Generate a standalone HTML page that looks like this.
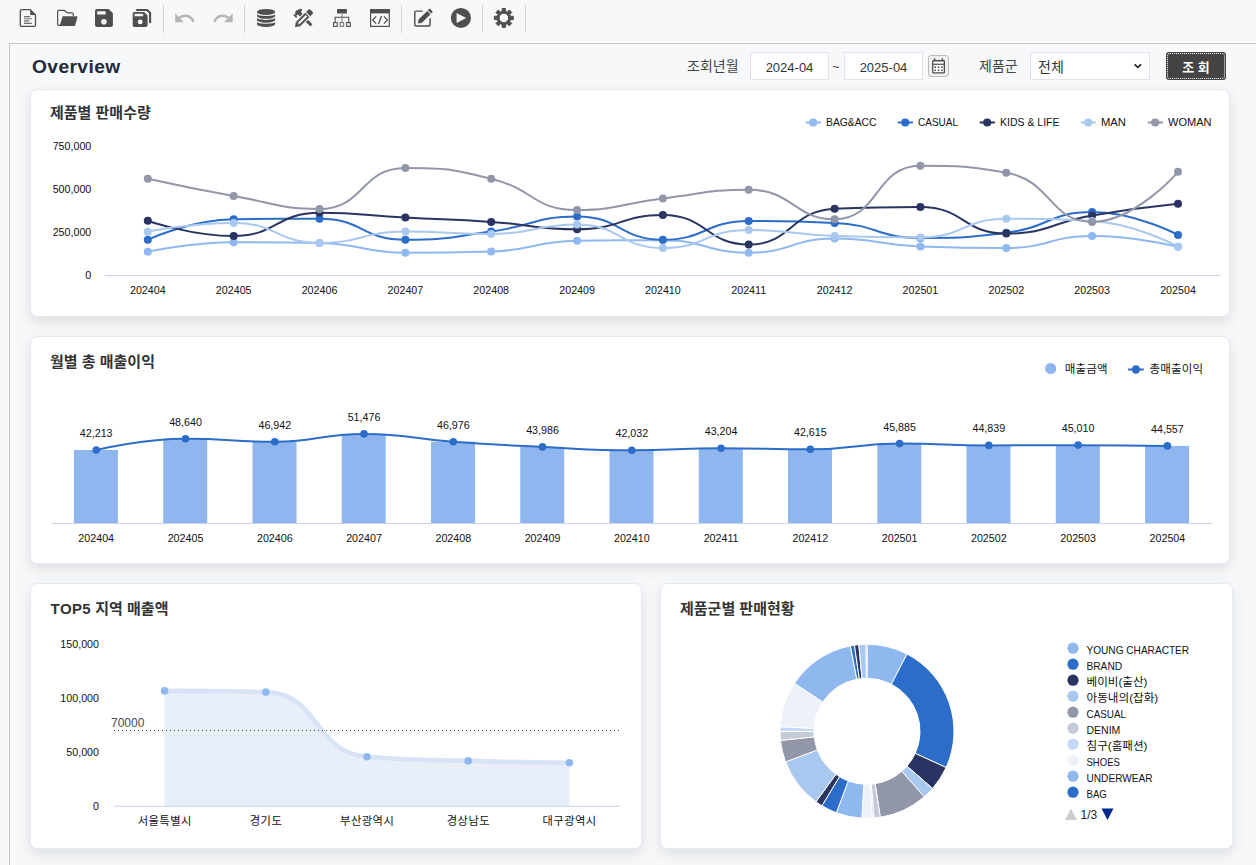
<!DOCTYPE html>
<html lang="ko">
<head>
<meta charset="utf-8">
<title>Overview</title>
<style>
html,body{margin:0;padding:0;overflow:hidden;}
body{width:1256px;height:865px;overflow:hidden;background:#f7f8fa;position:relative;
  font-family:"Liberation Sans","Noto Sans CJK KR","NanumGothic",sans-serif;color:#333;}
.abs{position:absolute;}
.sep{position:absolute;top:5px;width:1px;height:28px;background:#d4d4d4;}
.ico{position:absolute;overflow:visible;}
.frame{position:absolute;left:9px;top:43px;width:1247px;height:822px;border-left:1px solid #c6c6c6;border-top:1px solid #c6c6c6;box-sizing:border-box;background:#f7f8fa;}
.card{position:absolute;background:#fff;border:1px solid #e4e9f3;border-radius:7px;box-sizing:border-box;
  box-shadow:0 5px 13px rgba(0,0,0,0.105);}
.ctitle{position:absolute;font-size:15px;font-weight:bold;color:#333;white-space:nowrap;}
.h1{position:absolute;left:32px;top:54.7px;letter-spacing:0.4px;font-size:19.2px;font-weight:bold;color:#1e293b;line-height:24px;white-space:nowrap;}
.lbl{position:absolute;font-size:14px;color:#444;white-space:nowrap;line-height:20px;}
.inp{position:absolute;top:52px;height:28px;box-sizing:border-box;border:1px solid #dfe3ee;background:#fff;font-size:13px;color:#333;line-height:29px;text-align:center;}
</style>
</head>
<body>
<!-- toolbar -->
<div id="toolbar">
<svg class="abs" style="left:0;top:0" width="560" height="40" viewBox="0 0 560 40">
<g fill="none" stroke="#d5d5d5" stroke-width="1">
<path d="M163.5 5V33M244.5 5V33M401.5 5V33M482.5 5V33M525.5 5V33"/>
</g>
<g fill="#4f4f4f" stroke="none">
<!-- new doc -->
<path d="M21.8 9.6H30L35.5 15.1V24.9A1.5 1.5 0 0 1 34 26.4H21.8A1.5 1.5 0 0 1 20.3 24.9V11.1A1.5 1.5 0 0 1 21.8 9.6Z" fill="none" stroke="#4f4f4f" stroke-width="1.3"/>
<path d="M30.2 9.3L35.8 14.9H30.2Z"/>
<path d="M24 16.3H30.1V17.2H24ZM24 18.4H31.9V19.3H24ZM24 20.55H29.1V21.45H24ZM24 22.75H31.9V23.65H24Z" fill="#444"/>
<!-- folder open -->
<path d="M61 25.3H58.6A1 1 0 0 1 57.6 24.3V11.4A1 1 0 0 1 58.6 10.4H64.3L67.6 12.9H72.2A1 1 0 0 1 73.2 13.9V16" fill="none" stroke="#4f4f4f" stroke-width="1.2"/>
<path d="M62.6 16.2H76.6A0.8 0.8 0 0 1 77.4 17.2L75.2 25.2A1 1 0 0 1 74.2 25.9H59.6Z"/>
<!-- save -->
<path d="M97 9H108.6L112.9 13.3V25A2 2 0 0 1 110.9 27H97A2 2 0 0 1 95 25V11A2 2 0 0 1 97 9ZM97.2 11.2V14.4H105.6V11.2ZM103.9 18.9A2.8 2.8 0 1 0 103.9 24.5A2.8 2.8 0 1 0 103.9 18.9Z" fill-rule="evenodd"/>
<!-- save all -->
<path d="M134.4 12.1H144.2L147.6 15.5V25.3A1.7 1.7 0 0 1 145.9 27H134.4A1.7 1.7 0 0 1 132.7 25.3V13.8A1.7 1.7 0 0 1 134.4 12.1ZM134.6 13.8V16.3H143.2V13.8ZM140.2 19.5A2.4 2.4 0 1 0 140.2 24.3A2.4 2.4 0 1 0 140.2 19.5Z" fill-rule="evenodd"/>
<path d="M136.2 10H147L150.100 13.100V23" fill="none" stroke="#4f4f4f" stroke-width="2.1" stroke-linejoin="round"/>
<!-- database -->
<ellipse cx="266.05" cy="11.9" rx="9.05" ry="3"/>
<path d="M257 11.9V23.9A9.05 3 0 0 0 275.1 23.9V11.9Z"/>
<g fill="none" stroke="#f7f8fa" stroke-width="1.15"><path d="M256.5 12.45A9.55 3 0 0 0 275.6 12.45"/><path d="M256.5 16.35A9.55 3 0 0 0 275.6 16.35"/><path d="M256.5 20.25A9.55 3 0 0 0 275.6 20.25"/></g>
<!-- sitemap -->
<rect x="337" y="9.1" width="9.9" height="4.5" rx="0.6"/>
<rect x="341.3" y="13.6" width="1.3" height="9" fill="#9a9a9a"/>
<path d="M335.2 22.5V17.3H348.7V22.5" fill="none" stroke="#4f4f4f" stroke-width="1.1"/>
<g fill="none" stroke="#4f4f4f" stroke-width="1.1"><rect x="333.6" y="22.6" width="3.6" height="3.8"/><rect x="340.1" y="22.6" width="3.6" height="3.8" stroke="#777"/><rect x="346.7" y="22.6" width="3.6" height="3.8"/></g>
<!-- code window -->
<rect x="370.6" y="9.6" width="18.7" height="16.8" fill="none" stroke="#4f4f4f" stroke-width="1.2"/>
<rect x="370" y="9" width="19.9" height="4.4"/>
<path d="M376.2 16.4L372.7 20L376.2 23.6M383.900 16.4L387.400 20L383.900 23.6M381.5 16L378.600 24" fill="none" stroke="#4f4f4f" stroke-width="1.3"/>
<!-- edit -->
<path d="M422.7 11.1H416.300A1.500 1.500 0 0 0 414.800 12.600V24.400A1.500 1.500 0 0 0 416.300 25.900H428.600A1.500 1.500 0 0 0 430.100 24.400V18.2" fill="none" stroke="#4f4f4f" stroke-width="1.45"/>
<g transform="translate(-0.5,0.8)"><path d="M419.100 18.600L427.600 10.100L431.000 13.500L422.500 22.000L418.500 22.600Z"/>
<path d="M428.300 9.400L429.400 8.300A0.900 0.900 0 0 1 430.700 8.300L432.800 10.400A0.900 0.900 0 0 1 432.800 11.700L431.700 12.800Z"/></g>
<!-- play -->
<path d="M460.900 7.900A10.050 10.050 0 1 0 460.900 28.000A10.050 10.050 0 1 0 460.900 7.900ZM456.600 13.000L466.100 17.950L456.600 22.900Z" fill-rule="evenodd"/>
<path d="M502.06 11.49 L502.18 8.50 L505.52 8.50 L505.64 11.49 L507.15 12.12 L509.36 10.09 L511.71 12.44 L509.68 14.65 L510.31 16.16 L513.30 16.28 L513.30 19.62 L510.31 19.74 L509.68 21.25 L511.71 23.46 L509.36 25.81 L507.15 23.78 L505.64 24.41 L505.52 27.40 L502.18 27.40 L502.06 24.41 L500.55 23.78 L498.34 25.81 L495.99 23.46 L498.02 21.25 L497.39 19.74 L494.40 19.62 L494.40 16.28 L497.39 16.16 L498.02 14.65 L495.99 12.44 L498.34 10.09 L500.55 12.12Z M503.85 13.20A4.75 4.75 0 1 0 503.85 22.70A4.75 4.75 0 1 0 503.85 13.20Z" fill-rule="evenodd" stroke="#4f4f4f" stroke-width="1" stroke-linejoin="round"/>
<!-- tools -->
<path d="M300.3 14.3L311.4 25.4" fill="none" stroke="#4f4f4f" stroke-width="2.9"/>
<path d="M296.2 10.6L300.8 8.7L302.3 9.2L301.1 11.5L302.6 14.2L300.1 16.6L297.7 14.6L296.5 15.4L297.2 17.8L295.6 17.6L293 14.4L295.4 14.5L295.1 12.4Z"/>
<path d="M297.0 25.2L310.6 11.6" fill="none" stroke="#f7f8fa" stroke-width="8" stroke-linecap="round"/>
<path d="M298.3 23.9L307.3 14.9" fill="none" stroke="#4f4f4f" stroke-width="6"/>
<path d="M298.7 23.5L306.5 15.7" fill="none" stroke="#f7f8fa" stroke-width="2.1"/>
<path d="M295.0 27.1L295.9 21.6L300.6 26.3Z"/>
<path d="M306.0 12.0L310.2 16.2L312.5 13.9A1.5 1.5 0 0 0 312.5 11.8L310.400 9.700A1.5 1.5 0 0 0 308.300 9.700Z"/>
</g>
<g fill="#b4b4b4">
<path transform="translate(173.33 6.93) scale(0.95)" d="M12.5 8c-2.650 0-5.050.990-6.900 2.600L2 7v9h9l-3.620-3.620c1.390-1.160 3.160-1.880 5.120-1.880 3.540 0 6.550 2.310 7.600 5.500l2.370-.780C21.080 11.030 17.150 8 12.500 8z"/>
<path transform="translate(211.77 6.93) scale(0.95)" d="M18.400 10.600C16.550 8.990 14.150 8 11.500 8c-4.650 0-8.580 3.030-9.960 7.220L3.900 16c1.050-3.190 4.050-5.500 7.600-5.500 1.950 0 3.730.720 5.120 1.880L13 16h9V7l-3.600 3.600z"/>
</g>
</svg>

</div>
<div class="frame"></div>
<div class="h1">Overview</div>

<div class="lbl" style="left:687px;top:56px;">조회년월</div>
<div class="inp" style="left:750px;width:79px;">2024-04</div>
<div class="lbl" style="left:832px;top:57px;font-size:13px;">~</div>
<div class="inp" style="left:844px;width:79px;">2025-04</div>
<svg class="abs" style="left:928px;top:55px" width="21" height="22" viewBox="0 0 21 22">
<rect x="0.5" y="0.5" width="20" height="21" rx="2.5" fill="#efefef" stroke="#bdbdbd"/>
<rect x="4.75" y="5.75" width="11.6" height="12.2" rx="0.6" fill="#fff" stroke="#4d4d4d" stroke-width="1.3"/>
<path d="M4.75 9.25H16.35" stroke="#4d4d4d" stroke-width="1.2"/>
<path d="M6.7 3.2V5.6M14.4 3.2V5.6" stroke="#4d4d4d" stroke-width="1.3"/>
<g fill="#4d4d4d"><rect x="6.400" y="11.500" width="1.600" height="1.500"/><rect x="9.750" y="11.500" width="1.600" height="1.500"/><rect x="13.100" y="11.500" width="1.600" height="1.500"/><rect x="6.400" y="14.550" width="1.600" height="1.500"/><rect x="9.750" y="14.550" width="1.600" height="1.500"/><rect x="13.100" y="14.550" width="1.600" height="1.500"/></g>
</svg>
<div class="lbl" style="left:979px;top:56px;">제품군</div>
<div class="inp" style="left:1030px;width:120px;text-align:left;padding-left:7px;font-size:14px;line-height:28px;">전체</div>
<svg class="abs" style="left:1133px;top:62px" width="10" height="8" viewBox="0 0 10 8"><path d="M1.6 2.4 L4.8 5.4 L8 2.4" fill="none" stroke="#222" stroke-width="1.7"/></svg>
<div class="abs" style="left:1166px;top:52px;width:60px;height:28px;background:#444;border-radius:3px;box-sizing:border-box;"></div>
<div class="abs" style="left:1167px;top:53px;width:58px;height:26px;border:1px dotted #fff;border-radius:3px;box-sizing:border-box;"></div>
<div class="abs" style="left:1166px;top:52px;width:60px;height:28px;line-height:31px;text-align:center;color:#fff;font-size:13px;font-weight:bold;white-space:pre;">조 회</div>

<!-- cards -->
<div class="card" style="left:30px;top:89px;width:1200px;height:228px;"></div>
<div class="card" style="left:30px;top:336px;width:1200px;height:228px;"></div>
<div class="card" style="left:30px;top:583px;width:612px;height:266px;"></div>
<div class="card" style="left:660px;top:583px;width:573px;height:266px;"></div>

<div class="ctitle" style="left:50px;top:100.5px;">제품별 판매수량</div>
<div class="ctitle" style="left:50px;top:349.5px;">월별 총 매출이익</div>
<div class="ctitle" style="left:50.6px;top:596.5px;"><span style="letter-spacing:0.4px">TOP5</span> 지역 매출액</div>
<div class="ctitle" style="left:680px;top:596.5px;">제품군별 판매현황</div>

<svg class="abs" style="left:0;top:0" width="1256" height="330" viewBox="0 0 1256 330" font-family='&quot;Liberation Sans&quot;, &quot;Noto Sans CJK KR&quot;, &quot;NanumGothic&quot;, sans-serif'>
<line x1="104.9" y1="275.4" x2="1220.9" y2="275.4" stroke="#c9d3ea" stroke-width="1"/>
<text x="91.3" y="279.0" text-anchor="end" font-size="10.7" fill="#111">0</text>
<text x="91.3" y="235.9" text-anchor="end" font-size="10.7" fill="#111">250,000</text>
<text x="91.3" y="192.8" text-anchor="end" font-size="10.7" fill="#111">500,000</text>
<text x="91.3" y="149.7" text-anchor="end" font-size="10.7" fill="#111">750,000</text>
<text x="147.8" y="294" text-anchor="middle" font-size="10.7" fill="#111">202404</text>
<text x="233.7" y="294" text-anchor="middle" font-size="10.7" fill="#111">202405</text>
<text x="319.5" y="294" text-anchor="middle" font-size="10.7" fill="#111">202406</text>
<text x="405.4" y="294" text-anchor="middle" font-size="10.7" fill="#111">202407</text>
<text x="491.2" y="294" text-anchor="middle" font-size="10.7" fill="#111">202408</text>
<text x="577.1" y="294" text-anchor="middle" font-size="10.7" fill="#111">202409</text>
<text x="662.9" y="294" text-anchor="middle" font-size="10.7" fill="#111">202410</text>
<text x="748.7" y="294" text-anchor="middle" font-size="10.7" fill="#111">202411</text>
<text x="834.6" y="294" text-anchor="middle" font-size="10.7" fill="#111">202412</text>
<text x="920.4" y="294" text-anchor="middle" font-size="10.7" fill="#111">202501</text>
<text x="1006.3" y="294" text-anchor="middle" font-size="10.7" fill="#111">202502</text>
<text x="1092.1" y="294" text-anchor="middle" font-size="10.7" fill="#111">202503</text>
<text x="1178.0" y="294" text-anchor="middle" font-size="10.7" fill="#111">202504</text>
<path d="M147.82 251.80 C147.82 251.80 190.61 242.20 233.67 242.20 C276.46 242.20 276.73 242.20 319.52 242.90 C362.58 243.60 362.30 252.70 405.36 252.70 C448.15 252.70 448.45 252.70 491.21 251.50 C534.29 250.29 533.97 241.30 577.05 240.80 C619.81 240.30 620.20 240.30 662.90 240.30 C706.04 240.30 705.89 252.70 748.75 252.70 C791.73 252.70 791.47 238.60 834.59 238.60 C877.32 238.60 877.43 244.99 920.44 246.50 C963.27 248.00 963.57 248.00 1006.28 248.00 C1049.41 248.00 1049.17 236.00 1092.13 236.00 C1135.01 236.00 1177.98 246.80 1177.98 246.80" fill="none" stroke="#8fb8ef" stroke-width="2" stroke-linejoin="round"/>
<path d="M147.82 239.80 C147.82 239.80 190.15 219.81 233.67 219.30 C276.00 218.80 277.22 218.80 319.52 218.80 C363.06 218.80 361.91 239.80 405.36 239.80 C447.76 239.80 448.51 237.32 491.21 231.50 C534.36 225.62 534.57 216.40 577.05 216.40 C620.42 216.40 619.71 239.80 662.90 239.80 C705.56 239.80 705.33 221.00 748.75 221.00 C791.17 221.00 791.99 221.00 834.59 222.90 C877.83 224.83 877.23 237.90 920.44 237.90 C963.08 237.90 963.92 237.90 1006.28 232.70 C1049.77 227.36 1049.34 212.10 1092.13 212.10 C1135.19 212.10 1177.98 235.00 1177.98 235.00" fill="none" stroke="#2c6dc9" stroke-width="2" stroke-linejoin="round"/>
<path d="M147.82 220.70 C147.82 220.70 191.17 236.00 233.67 236.00 C277.01 236.00 275.87 212.80 319.52 212.80 C361.72 212.80 362.43 215.32 405.36 217.60 C448.28 219.87 448.34 218.98 491.21 221.90 C534.18 224.83 534.35 229.30 577.05 229.30 C620.19 229.30 620.89 215.00 662.90 215.00 C706.73 215.00 706.34 244.60 748.75 244.60 C792.18 244.60 789.95 210.86 834.59 208.80 C875.80 206.90 878.50 206.90 920.44 206.90 C964.35 206.90 962.84 233.60 1006.28 233.60 C1048.68 233.60 1048.94 223.00 1092.13 215.50 C1134.78 208.10 1177.98 203.80 1177.98 203.80" fill="none" stroke="#293462" stroke-width="2" stroke-linejoin="round"/>
<path d="M147.82 231.70 C147.82 231.70 191.20 222.90 233.67 222.90 C277.05 222.90 276.21 242.90 319.52 242.90 C362.06 242.90 362.26 231.50 405.36 231.50 C448.11 231.50 448.40 233.90 491.21 233.90 C534.25 233.90 534.78 224.50 577.05 224.50 C620.62 224.50 619.66 248.00 662.90 248.00 C705.51 248.00 705.41 230.00 748.75 230.00 C791.26 230.00 791.62 234.60 834.59 236.00 C877.47 237.40 878.00 237.40 920.44 237.40 C963.85 237.40 962.88 218.80 1006.28 218.80 C1048.72 218.80 1050.13 218.80 1092.13 221.00 C1135.97 223.30 1177.98 246.80 1177.98 246.80" fill="none" stroke="#a9c8f0" stroke-width="2" stroke-linejoin="round"/>
<path d="M147.82 178.70 C147.82 178.70 190.57 188.29 233.67 195.90 C276.42 203.44 278.56 209.00 319.52 209.00 C364.40 209.00 360.39 167.90 405.36 167.90 C446.24 167.90 449.46 168.46 491.21 178.70 C535.30 189.51 532.98 210.00 577.05 210.00 C618.83 210.00 619.90 203.58 662.90 198.50 C705.74 193.43 706.92 189.70 748.75 189.70 C792.76 189.70 793.98 219.30 834.59 219.30 C879.83 219.30 874.07 165.80 920.44 165.80 C959.92 165.80 966.34 165.80 1006.28 172.70 C1052.18 180.63 1049.31 221.90 1092.13 221.90 C1135.15 221.90 1177.98 171.80 1177.98 171.80" fill="none" stroke="#9196a9" stroke-width="2" stroke-linejoin="round"/>
<circle cx="147.8" cy="251.8" r="4" fill="#8fb8ef"/>
<circle cx="233.7" cy="242.2" r="4" fill="#8fb8ef"/>
<circle cx="319.5" cy="242.9" r="4" fill="#8fb8ef"/>
<circle cx="405.4" cy="252.7" r="4" fill="#8fb8ef"/>
<circle cx="491.2" cy="251.5" r="4" fill="#8fb8ef"/>
<circle cx="577.1" cy="240.8" r="4" fill="#8fb8ef"/>
<circle cx="662.9" cy="240.3" r="4" fill="#8fb8ef"/>
<circle cx="748.7" cy="252.7" r="4" fill="#8fb8ef"/>
<circle cx="834.6" cy="238.6" r="4" fill="#8fb8ef"/>
<circle cx="920.4" cy="246.5" r="4" fill="#8fb8ef"/>
<circle cx="1006.3" cy="248.0" r="4" fill="#8fb8ef"/>
<circle cx="1092.1" cy="236.0" r="4" fill="#8fb8ef"/>
<circle cx="1178.0" cy="246.8" r="4" fill="#8fb8ef"/>
<circle cx="147.8" cy="239.8" r="4" fill="#2c6dc9"/>
<circle cx="233.7" cy="219.3" r="4" fill="#2c6dc9"/>
<circle cx="319.5" cy="218.8" r="4" fill="#2c6dc9"/>
<circle cx="405.4" cy="239.8" r="4" fill="#2c6dc9"/>
<circle cx="491.2" cy="231.5" r="4" fill="#2c6dc9"/>
<circle cx="577.1" cy="216.4" r="4" fill="#2c6dc9"/>
<circle cx="662.9" cy="239.8" r="4" fill="#2c6dc9"/>
<circle cx="748.7" cy="221.0" r="4" fill="#2c6dc9"/>
<circle cx="834.6" cy="222.9" r="4" fill="#2c6dc9"/>
<circle cx="920.4" cy="237.9" r="4" fill="#2c6dc9"/>
<circle cx="1006.3" cy="232.7" r="4" fill="#2c6dc9"/>
<circle cx="1092.1" cy="212.1" r="4" fill="#2c6dc9"/>
<circle cx="1178.0" cy="235.0" r="4" fill="#2c6dc9"/>
<circle cx="147.8" cy="220.7" r="4" fill="#293462"/>
<circle cx="233.7" cy="236.0" r="4" fill="#293462"/>
<circle cx="319.5" cy="212.8" r="4" fill="#293462"/>
<circle cx="405.4" cy="217.6" r="4" fill="#293462"/>
<circle cx="491.2" cy="221.9" r="4" fill="#293462"/>
<circle cx="577.1" cy="229.3" r="4" fill="#293462"/>
<circle cx="662.9" cy="215.0" r="4" fill="#293462"/>
<circle cx="748.7" cy="244.6" r="4" fill="#293462"/>
<circle cx="834.6" cy="208.8" r="4" fill="#293462"/>
<circle cx="920.4" cy="206.9" r="4" fill="#293462"/>
<circle cx="1006.3" cy="233.6" r="4" fill="#293462"/>
<circle cx="1092.1" cy="215.5" r="4" fill="#293462"/>
<circle cx="1178.0" cy="203.8" r="4" fill="#293462"/>
<circle cx="147.8" cy="231.7" r="4" fill="#a9c8f0"/>
<circle cx="233.7" cy="222.9" r="4" fill="#a9c8f0"/>
<circle cx="319.5" cy="242.9" r="4" fill="#a9c8f0"/>
<circle cx="405.4" cy="231.5" r="4" fill="#a9c8f0"/>
<circle cx="491.2" cy="233.9" r="4" fill="#a9c8f0"/>
<circle cx="577.1" cy="224.5" r="4" fill="#a9c8f0"/>
<circle cx="662.9" cy="248.0" r="4" fill="#a9c8f0"/>
<circle cx="748.7" cy="230.0" r="4" fill="#a9c8f0"/>
<circle cx="834.6" cy="236.0" r="4" fill="#a9c8f0"/>
<circle cx="920.4" cy="237.4" r="4" fill="#a9c8f0"/>
<circle cx="1006.3" cy="218.8" r="4" fill="#a9c8f0"/>
<circle cx="1092.1" cy="221.0" r="4" fill="#a9c8f0"/>
<circle cx="1178.0" cy="246.8" r="4" fill="#a9c8f0"/>
<circle cx="147.8" cy="178.7" r="4" fill="#9196a9"/>
<circle cx="233.7" cy="195.9" r="4" fill="#9196a9"/>
<circle cx="319.5" cy="209.0" r="4" fill="#9196a9"/>
<circle cx="405.4" cy="167.9" r="4" fill="#9196a9"/>
<circle cx="491.2" cy="178.7" r="4" fill="#9196a9"/>
<circle cx="577.1" cy="210.0" r="4" fill="#9196a9"/>
<circle cx="662.9" cy="198.5" r="4" fill="#9196a9"/>
<circle cx="748.7" cy="189.7" r="4" fill="#9196a9"/>
<circle cx="834.6" cy="219.3" r="4" fill="#9196a9"/>
<circle cx="920.4" cy="165.8" r="4" fill="#9196a9"/>
<circle cx="1006.3" cy="172.7" r="4" fill="#9196a9"/>
<circle cx="1092.1" cy="221.9" r="4" fill="#9196a9"/>
<circle cx="1178.0" cy="171.8" r="4" fill="#9196a9"/>
<line x1="805.7" y1="122.5" x2="820.9" y2="122.5" stroke="#8fb8ef" stroke-width="2"/>
<circle cx="813.2" cy="122.5" r="4.1" fill="#8fb8ef"/>
<text x="826.0" y="126.3" font-size="11" fill="#111" textLength="50.5" lengthAdjust="spacingAndGlyphs">BAG&amp;ACC</text>
<line x1="897.7" y1="122.5" x2="912.9" y2="122.5" stroke="#2c6dc9" stroke-width="2"/>
<circle cx="905.2" cy="122.5" r="4.1" fill="#2c6dc9"/>
<text x="918.0" y="126.3" font-size="11" fill="#111" textLength="40.0" lengthAdjust="spacingAndGlyphs">CASUAL</text>
<line x1="979.7" y1="122.5" x2="994.9" y2="122.5" stroke="#293462" stroke-width="2"/>
<circle cx="987.2" cy="122.5" r="4.1" fill="#293462"/>
<text x="1000.0" y="126.3" font-size="11" fill="#111" textLength="59.5" lengthAdjust="spacingAndGlyphs">KIDS &amp; LIFE</text>
<line x1="1080.7" y1="122.5" x2="1095.9" y2="122.5" stroke="#a9c8f0" stroke-width="2"/>
<circle cx="1088.2" cy="122.5" r="4.1" fill="#a9c8f0"/>
<text x="1101.0" y="126.3" font-size="11" fill="#111" textLength="25.0" lengthAdjust="spacingAndGlyphs">MAN</text>
<line x1="1147.7" y1="122.5" x2="1162.9" y2="122.5" stroke="#9196a9" stroke-width="2"/>
<circle cx="1155.2" cy="122.5" r="4.1" fill="#9196a9"/>
<text x="1168.0" y="126.3" font-size="11" fill="#111" textLength="43.5" lengthAdjust="spacingAndGlyphs">WOMAN</text>
</svg>
<svg class="abs" style="left:0;top:330px" width="1256" height="240" viewBox="0 330 1256 240" font-family='&quot;Liberation Sans&quot;, &quot;Noto Sans CJK KR&quot;, &quot;NanumGothic&quot;, sans-serif'>
<rect x="73.9" y="450.0" width="44.0" height="73.5" fill="#8fb6ef"/>
<rect x="163.2" y="438.8" width="44.0" height="84.7" fill="#8fb6ef"/>
<rect x="252.5" y="441.8" width="44.0" height="81.7" fill="#8fb6ef"/>
<rect x="341.7" y="433.9" width="44.0" height="89.6" fill="#8fb6ef"/>
<rect x="431.0" y="441.7" width="44.0" height="81.8" fill="#8fb6ef"/>
<rect x="520.2" y="446.9" width="44.0" height="76.6" fill="#8fb6ef"/>
<rect x="609.5" y="450.3" width="44.0" height="73.2" fill="#8fb6ef"/>
<rect x="698.8" y="448.3" width="44.0" height="75.2" fill="#8fb6ef"/>
<rect x="788.0" y="449.3" width="44.0" height="74.2" fill="#8fb6ef"/>
<rect x="877.3" y="443.6" width="44.0" height="79.9" fill="#8fb6ef"/>
<rect x="966.5" y="445.4" width="44.0" height="78.1" fill="#8fb6ef"/>
<rect x="1055.8" y="445.1" width="44.0" height="78.4" fill="#8fb6ef"/>
<rect x="1145.1" y="445.9" width="44.0" height="77.6" fill="#8fb6ef"/>
<line x1="51.6" y1="523.5" x2="1212.0" y2="523.5" stroke="#c9d3ea" stroke-width="1"/>
<path d="M96.23 450.01 C96.23 450.01 140.70 438.82 185.49 438.82 C229.96 438.82 230.20 441.77 274.75 441.77 C319.46 441.77 319.38 433.88 364.02 433.88 C408.64 433.88 408.60 438.45 453.28 441.71 C497.86 444.97 497.89 444.77 542.54 446.92 C587.15 449.07 587.16 450.32 631.80 450.32 C676.42 450.32 676.43 448.28 721.06 448.28 C765.69 448.28 765.74 449.31 810.32 449.31 C855.00 449.31 854.91 443.61 899.58 443.61 C944.17 443.61 944.21 445.44 988.85 445.44 C1033.47 445.44 1033.48 445.14 1078.11 445.14 C1122.74 445.14 1167.37 445.93 1167.37 445.93" fill="none" stroke="#2c6dc9" stroke-width="2"/>
<circle cx="96.2" cy="450.0" r="3.8" fill="#2c6dc9"/>
<text x="96.2" y="437.0" text-anchor="middle" font-size="10.7" fill="#111">42,213</text>
<text x="96.2" y="542" text-anchor="middle" font-size="10.7" fill="#111">202404</text>
<circle cx="185.5" cy="438.8" r="3.8" fill="#2c6dc9"/>
<text x="185.5" y="425.8" text-anchor="middle" font-size="10.7" fill="#111">48,640</text>
<text x="185.5" y="542" text-anchor="middle" font-size="10.7" fill="#111">202405</text>
<circle cx="274.8" cy="441.8" r="3.8" fill="#2c6dc9"/>
<text x="274.8" y="428.8" text-anchor="middle" font-size="10.7" fill="#111">46,942</text>
<text x="274.8" y="542" text-anchor="middle" font-size="10.7" fill="#111">202406</text>
<circle cx="364.0" cy="433.9" r="3.8" fill="#2c6dc9"/>
<text x="364.0" y="420.9" text-anchor="middle" font-size="10.7" fill="#111">51,476</text>
<text x="364.0" y="542" text-anchor="middle" font-size="10.7" fill="#111">202407</text>
<circle cx="453.3" cy="441.7" r="3.8" fill="#2c6dc9"/>
<text x="453.3" y="428.7" text-anchor="middle" font-size="10.7" fill="#111">46,976</text>
<text x="453.3" y="542" text-anchor="middle" font-size="10.7" fill="#111">202408</text>
<circle cx="542.5" cy="446.9" r="3.8" fill="#2c6dc9"/>
<text x="542.5" y="433.9" text-anchor="middle" font-size="10.7" fill="#111">43,986</text>
<text x="542.5" y="542" text-anchor="middle" font-size="10.7" fill="#111">202409</text>
<circle cx="631.8" cy="450.3" r="3.8" fill="#2c6dc9"/>
<text x="631.8" y="437.3" text-anchor="middle" font-size="10.7" fill="#111">42,032</text>
<text x="631.8" y="542" text-anchor="middle" font-size="10.7" fill="#111">202410</text>
<circle cx="721.1" cy="448.3" r="3.8" fill="#2c6dc9"/>
<text x="721.1" y="435.3" text-anchor="middle" font-size="10.7" fill="#111">43,204</text>
<text x="721.1" y="542" text-anchor="middle" font-size="10.7" fill="#111">202411</text>
<circle cx="810.3" cy="449.3" r="3.8" fill="#2c6dc9"/>
<text x="810.3" y="436.3" text-anchor="middle" font-size="10.7" fill="#111">42,615</text>
<text x="810.3" y="542" text-anchor="middle" font-size="10.7" fill="#111">202412</text>
<circle cx="899.6" cy="443.6" r="3.8" fill="#2c6dc9"/>
<text x="899.6" y="430.6" text-anchor="middle" font-size="10.7" fill="#111">45,885</text>
<text x="899.6" y="542" text-anchor="middle" font-size="10.7" fill="#111">202501</text>
<circle cx="988.8" cy="445.4" r="3.8" fill="#2c6dc9"/>
<text x="988.8" y="432.4" text-anchor="middle" font-size="10.7" fill="#111">44,839</text>
<text x="988.8" y="542" text-anchor="middle" font-size="10.7" fill="#111">202502</text>
<circle cx="1078.1" cy="445.1" r="3.8" fill="#2c6dc9"/>
<text x="1078.1" y="432.1" text-anchor="middle" font-size="10.7" fill="#111">45,010</text>
<text x="1078.1" y="542" text-anchor="middle" font-size="10.7" fill="#111">202503</text>
<circle cx="1167.4" cy="445.9" r="3.8" fill="#2c6dc9"/>
<text x="1167.4" y="432.9" text-anchor="middle" font-size="10.7" fill="#111">44,557</text>
<text x="1167.4" y="542" text-anchor="middle" font-size="10.7" fill="#111">202504</text>
<circle cx="1050.7" cy="368.5" r="5.6" fill="#8fb6ef"/>
<text x="1064.7" y="372.9" font-size="11.5" fill="#111" textLength="43" lengthAdjust="spacing">매출금액</text>
<line x1="1128" y1="369.5" x2="1143.8" y2="369.5" stroke="#2c6dc9" stroke-width="2"/>
<circle cx="1135.9" cy="369.5" r="4.2" fill="#2c6dc9"/>
<text x="1149.4" y="372.9" font-size="11.5" fill="#111" textLength="53.6" lengthAdjust="spacing">총매출이익</text>
</svg>
<svg class="abs" style="left:0;top:575px" width="650" height="290" viewBox="0 575 650 290" font-family='&quot;Liberation Sans&quot;, &quot;Noto Sans CJK KR&quot;, &quot;NanumGothic&quot;, sans-serif'>
<path d="M164.60 690.90 C164.60 690.90 219.52 690.90 265.80 692.10 C320.72 693.52 312.10 751.94 367.00 756.80 C413.30 760.90 417.58 759.40 468.20 760.90 C518.78 762.40 569.40 762.80 569.40 762.80 L569.40 806.30 L164.60 806.30 Z" fill="#e8eff9"/>
<path d="M164.60 690.90 C164.60 690.90 219.52 690.90 265.80 692.10 C320.72 693.52 312.10 751.94 367.00 756.80 C413.30 760.90 417.58 759.40 468.20 760.90 C518.78 762.40 569.40 762.80 569.40 762.80" fill="none" stroke="#d8e4f5" stroke-width="4.6" stroke-linecap="round"/>
<line x1="114.0" y1="806.3" x2="620.0" y2="806.3" stroke="#c9d3ea" stroke-width="1"/>
<text x="99" y="810.3" text-anchor="end" font-size="10.7" fill="#111">0</text>
<text x="99" y="756.2" text-anchor="end" font-size="10.7" fill="#111">50,000</text>
<text x="99" y="702.1" text-anchor="end" font-size="10.7" fill="#111">100,000</text>
<text x="99" y="648.0" text-anchor="end" font-size="10.7" fill="#111">150,000</text>
<circle cx="164.6" cy="690.9" r="3.8" fill="#8fb8ef"/>
<circle cx="265.8" cy="692.1" r="3.8" fill="#8fb8ef"/>
<circle cx="367.0" cy="756.8" r="3.8" fill="#8fb8ef"/>
<circle cx="468.2" cy="760.9" r="3.8" fill="#8fb8ef"/>
<circle cx="569.4" cy="762.8" r="3.8" fill="#8fb8ef"/>
<text x="164.8" y="825" text-anchor="middle" font-size="11.3" letter-spacing="0.45" fill="#111">서울특별시</text>
<text x="266.0" y="825" text-anchor="middle" font-size="11.3" letter-spacing="0.45" fill="#111">경기도</text>
<text x="367.2" y="825" text-anchor="middle" font-size="11.3" letter-spacing="0.45" fill="#111">부산광역시</text>
<text x="468.4" y="825" text-anchor="middle" font-size="11.3" letter-spacing="0.45" fill="#111">경상남도</text>
<text x="569.6" y="825" text-anchor="middle" font-size="11.3" letter-spacing="0.45" fill="#111">대구광역시</text>
<line x1="114.0" y1="730.5" x2="620.0" y2="730.5" stroke="#444" stroke-width="1" stroke-dasharray="1 3"/>
<text x="111" y="726.5" font-size="12" fill="#464a5a" font-family="Liberation Sans, sans-serif">70000</text>
</svg>
<svg class="abs" style="left:650px;top:575px" width="606" height="290" viewBox="650 575 606 290" font-family='&quot;Liberation Sans&quot;, &quot;Noto Sans CJK KR&quot;, &quot;NanumGothic&quot;, sans-serif'>
<path d="M867.00 644.30 A87.0 87.0 0 0 1 906.97 654.03 L891.35 684.22 A53.0 53.0 0 0 0 867.00 678.30 Z" fill="#8fb8ef" stroke="#fff" stroke-width="1" stroke-linejoin="round"/>
<path d="M906.97 654.03 A87.0 87.0 0 0 1 946.10 767.52 L915.19 753.36 A53.0 53.0 0 0 0 891.35 684.22 Z" fill="#2c6dc9" stroke="#fff" stroke-width="1" stroke-linejoin="round"/>
<path d="M946.10 767.52 A87.0 87.0 0 0 1 932.56 788.49 L906.94 766.14 A53.0 53.0 0 0 0 915.19 753.36 Z" fill="#293462" stroke="#fff" stroke-width="1" stroke-linejoin="round"/>
<path d="M932.56 788.49 A87.0 87.0 0 0 1 924.19 796.86 L901.84 771.24 A53.0 53.0 0 0 0 906.94 766.14 Z" fill="#a9c8f0" stroke="#fff" stroke-width="1" stroke-linejoin="round"/>
<path d="M924.19 796.86 A87.0 87.0 0 0 1 880.31 817.28 L875.11 783.68 A53.0 53.0 0 0 0 901.84 771.24 Z" fill="#9196a9" stroke="#fff" stroke-width="1" stroke-linejoin="round"/>
<path d="M880.31 817.28 A87.0 87.0 0 0 1 873.98 818.02 L871.25 784.13 A53.0 53.0 0 0 0 875.11 783.68 Z" fill="#c5cad8" stroke="#fff" stroke-width="1" stroke-linejoin="round"/>
<path d="M873.98 818.02 A87.0 87.0 0 0 1 872.16 818.15 L870.14 784.21 A53.0 53.0 0 0 0 871.25 784.13 Z" fill="#c4d9f7" stroke="#fff" stroke-width="1" stroke-linejoin="round"/>
<path d="M872.16 818.15 A87.0 87.0 0 0 1 861.84 818.15 L863.86 784.21 A53.0 53.0 0 0 0 870.14 784.21 Z" fill="#edf1f8" stroke="#fff" stroke-width="1" stroke-linejoin="round"/>
<path d="M861.84 818.15 A87.0 87.0 0 0 1 836.32 812.71 L848.31 780.89 A53.0 53.0 0 0 0 863.86 784.21 Z" fill="#8fb8ef" stroke="#fff" stroke-width="1" stroke-linejoin="round"/>
<path d="M836.32 812.71 A87.0 87.0 0 0 1 821.93 805.72 L839.54 776.63 A53.0 53.0 0 0 0 848.31 780.89 Z" fill="#2c6dc9" stroke="#fff" stroke-width="1" stroke-linejoin="round"/>
<path d="M821.93 805.72 A87.0 87.0 0 0 1 815.99 801.77 L835.92 774.23 A53.0 53.0 0 0 0 839.54 776.63 Z" fill="#293462" stroke="#fff" stroke-width="1" stroke-linejoin="round"/>
<path d="M815.99 801.77 A87.0 87.0 0 0 1 785.56 761.91 L817.39 749.95 A53.0 53.0 0 0 0 835.92 774.23 Z" fill="#a9c8f0" stroke="#fff" stroke-width="1" stroke-linejoin="round"/>
<path d="M785.56 761.91 A87.0 87.0 0 0 1 780.48 740.39 L814.29 736.84 A53.0 53.0 0 0 0 817.39 749.95 Z" fill="#9196a9" stroke="#fff" stroke-width="1" stroke-linejoin="round"/>
<path d="M780.48 740.39 A87.0 87.0 0 0 1 780.00 731.60 L814.00 731.49 A53.0 53.0 0 0 0 814.29 736.84 Z" fill="#c5cad8" stroke="#fff" stroke-width="1" stroke-linejoin="round"/>
<path d="M780.00 731.60 A87.0 87.0 0 0 1 780.13 726.60 L814.08 728.43 A53.0 53.0 0 0 0 814.00 731.49 Z" fill="#c4d9f7" stroke="#fff" stroke-width="1" stroke-linejoin="round"/>
<path d="M780.13 726.60 A87.0 87.0 0 0 1 794.45 683.28 L822.80 702.05 A53.0 53.0 0 0 0 814.08 728.43 Z" fill="#edf1f8" stroke="#fff" stroke-width="1" stroke-linejoin="round"/>
<path d="M794.45 683.28 A87.0 87.0 0 0 1 850.40 645.90 L856.89 679.27 A53.0 53.0 0 0 0 822.80 702.05 Z" fill="#8fb8ef" stroke="#fff" stroke-width="1" stroke-linejoin="round"/>
<path d="M850.40 645.90 A87.0 87.0 0 0 1 854.44 645.21 L859.35 678.86 A53.0 53.0 0 0 0 856.89 679.27 Z" fill="#2c6dc9" stroke="#fff" stroke-width="1" stroke-linejoin="round"/>
<path d="M854.44 645.21 A87.0 87.0 0 0 1 858.81 644.69 L862.01 678.54 A53.0 53.0 0 0 0 859.35 678.86 Z" fill="#293462" stroke="#fff" stroke-width="1" stroke-linejoin="round"/>
<path d="M858.81 644.69 A87.0 87.0 0 0 1 866.09 644.30 L866.44 678.30 A53.0 53.0 0 0 0 862.01 678.54 Z" fill="#a9c8f0" stroke="#fff" stroke-width="1" stroke-linejoin="round"/>
<path d="M866.09 644.30 A87.0 87.0 0 0 1 867.00 644.30 L867.00 678.30 A53.0 53.0 0 0 0 866.44 678.30 Z" fill="#9196a9" stroke="#fff" stroke-width="1" stroke-linejoin="round"/>
<circle cx="1073" cy="648.2" r="5.6" fill="#8fb8ef"/>
<text x="1086.5" y="653.6" font-size="11" fill="#111" textLength="102.6" lengthAdjust="spacingAndGlyphs">YOUNG CHARACTER</text>
<circle cx="1073" cy="664.2" r="5.6" fill="#2c6dc9"/>
<text x="1086.5" y="669.6" font-size="11" fill="#111" textLength="35.6" lengthAdjust="spacingAndGlyphs">BRAND</text>
<circle cx="1073" cy="680.2" r="5.6" fill="#293462"/>
<text x="1086.5" y="685.6" font-size="11" fill="#111" textLength="60.9" lengthAdjust="spacingAndGlyphs">베이비(출산)</text>
<circle cx="1073" cy="696.2" r="5.6" fill="#a9c8f0"/>
<text x="1086.5" y="701.6" font-size="11" fill="#111" textLength="71.7" lengthAdjust="spacingAndGlyphs">아동내의(잡화)</text>
<circle cx="1073" cy="712.2" r="5.6" fill="#9196a9"/>
<text x="1086.5" y="717.6" font-size="11" fill="#111" textLength="39.5" lengthAdjust="spacingAndGlyphs">CASUAL</text>
<circle cx="1073" cy="728.2" r="5.6" fill="#c5cad8"/>
<text x="1086.5" y="733.6" font-size="11" fill="#111" textLength="33.8" lengthAdjust="spacingAndGlyphs">DENIM</text>
<circle cx="1073" cy="744.2" r="5.6" fill="#c4d9f7"/>
<text x="1086.5" y="749.6" font-size="11" fill="#111" textLength="60.9" lengthAdjust="spacingAndGlyphs">침구(홈패션)</text>
<circle cx="1073" cy="760.2" r="5.6" fill="#edf1f8"/>
<text x="1086.5" y="765.6" font-size="11" fill="#111" textLength="33.4" lengthAdjust="spacingAndGlyphs">SHOES</text>
<circle cx="1073" cy="776.2" r="5.6" fill="#8fb8ef"/>
<text x="1086.5" y="781.6" font-size="11" fill="#111" textLength="66.1" lengthAdjust="spacingAndGlyphs">UNDERWEAR</text>
<circle cx="1073" cy="792.2" r="5.6" fill="#2c6dc9"/>
<text x="1086.5" y="797.6" font-size="11" fill="#111" textLength="20.3" lengthAdjust="spacingAndGlyphs">BAG</text>
<path d="M1065 820 L1071 808.5 L1077 820 Z" fill="#ccc"/>
<text x="1080.5" y="818.5" font-size="12" fill="#222">1/3</text>
<path d="M1101.5 808.5 L1113.5 808.5 L1107.5 820 Z" fill="#00278e"/>
</svg>
</body>
</html>
